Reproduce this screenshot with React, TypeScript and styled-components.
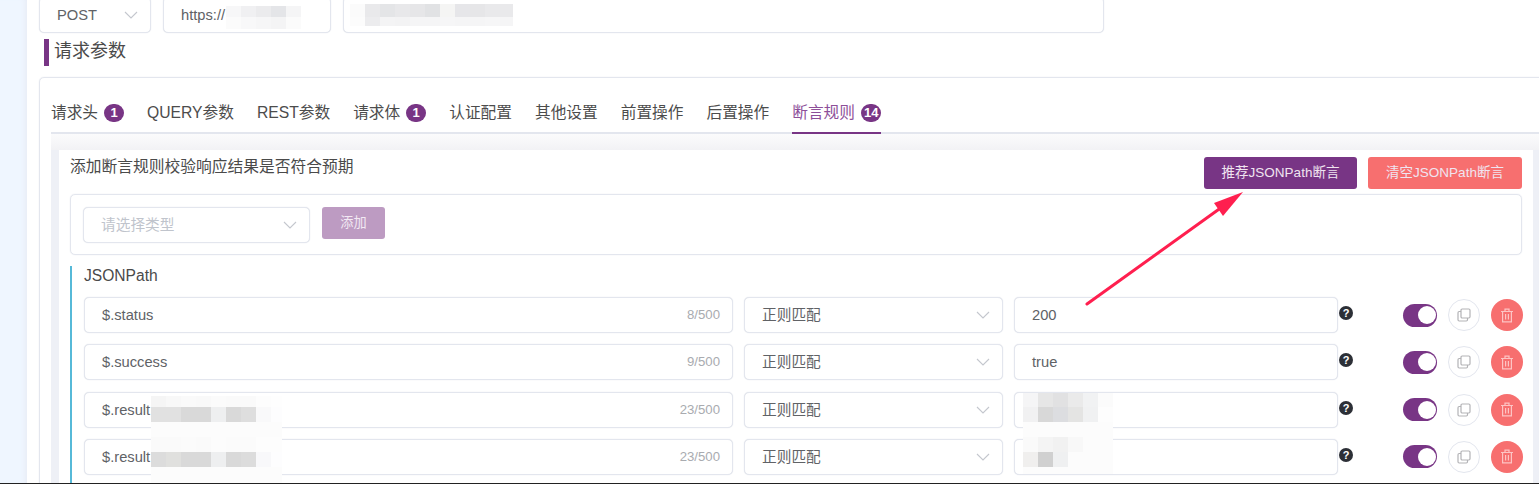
import styled, { createGlobalStyle } from "styled-components";

const PURPLE = "#783585";
const RED = "#f76f6f";
const BORDER = "#e3e6ee";

const GlobalStyle = createGlobalStyle`
  html, body {
    margin: 0;
    padding: 0;
    background: #fff;
  }
  * {
    box-sizing: border-box;
  }
`;

const Frame = styled.div`
  position: relative;
  display: flex;
  width: 1539px;
  height: 484px;
  overflow: hidden;
  background: #fff;
  border-bottom: 1px solid #222;
  font-family: "Liberation Sans", "Noto Sans CJK SC", sans-serif;
  color: #606266;
`;

const Rail = styled.div`
  flex: 0 0 27px;
  background: #eff6ff;
  box-shadow: inset -6px 0 6px -5px #e6e9f2;
`;

const Main = styled.div`
  flex: 1;
  min-width: 0;
  padding-left: 12px;
`;

const TopRow = styled.div`
  display: flex;
  gap: 12px;
  height: 36px;
  margin-top: -3px;
`;

const Field = styled.div<{ $width: number }>`
  flex: 0 0 ${(p) => p.$width}px;
  display: flex;
  align-items: center;
  justify-content: space-between;
  height: 36px;
  padding: 0 12px 0 17px;
  background: #fff;
  border: 1px solid ${BORDER};
  box-shadow: 0 0 1px #d5d8e2;
  border-radius: 5px;
  font-size: 14.7px;
  line-height: 20px;
  white-space: nowrap;
`;

const Placeholder = styled.span`
  color: #c0c4cc;
`;

const Counter = styled.span`
  font-size: 13.2px;
  color: #a9abb0;
`;

const SectionTitle = styled.div`
  height: 27px;
  margin: 6px 0 0 5px;
  padding-left: 5px;
  border-left: 5px solid ${PURPLE};
  font-size: 18px;
  line-height: 25px;
  color: #4a4a4a;
`;

const Card = styled.div`
  width: 1520px;
  height: 420px;
  margin-top: 11px;
  padding-left: 11px;
  border: 1px solid ${BORDER};
  box-shadow: 0 0 1px #d5d8e2;
  border-radius: 5px;
`;

const Tabs = styled.div`
  display: flex;
  gap: 23px;
  height: 56px;
  border-bottom: 2px solid ${BORDER};
`;

const Tab = styled.div<{ $active?: boolean }>`
  display: flex;
  align-items: center;
  gap: 6px;
  height: 56px;
  padding-top: 16px;
  border-bottom: 2px solid ${(p) => (p.$active ? PURPLE : "transparent")};
  font-size: 15.7px;
  line-height: 20px;
  white-space: nowrap;
  color: ${(p) => (p.$active ? "#8d4f99" : "#4c4c4c")};
`;

const Badge = styled.span`
  display: inline-flex;
  align-items: center;
  justify-content: center;
  min-width: 20px;
  height: 18px;
  padding: 0 3px;
  border-radius: 9px;
  background: ${PURPLE};
  color: #fff;
  font-size: 13px;
  font-weight: 700;
`;

const Content = styled.div`
  width: 1488px;
  height: 360px;
  padding: 16px 6px 0 8px;
  background: linear-gradient(#fbfbfc, #f2f2f5 16px, #eef0f6 16px);
`;

const Panel = styled.div`
  height: 344px;
  padding: 7px 11px 0;
  background: #fff;
`;

const PanelHead = styled.div`
  display: flex;
  gap: 11px;
  height: 32px;
`;

const PanelTitle = styled.div`
  flex: 1;
  font-size: 15.75px;
  line-height: 20px;
  color: #4a4a4a;
`;

const Button = styled.div<{ $bg: string; $width: number }>`
  flex: 0 0 ${(p) => p.$width}px;
  display: flex;
  align-items: center;
  justify-content: center;
  height: 32px;
  background: ${(p) => p.$bg};
  border-radius: 3px;
  color: #f0e4f0;
  font-size: 13.5px;
  line-height: 18px;
  white-space: nowrap;
`;

const AddBox = styled.div`
  display: flex;
  gap: 12px;
  align-items: flex-start;
  height: 61px;
  margin-top: 5px;
  padding: 12px 12px 0;
  border: 1px solid ${BORDER};
  box-shadow: 0 0 1px #d5d8e2;
  border-radius: 5px;
`;

const AddButton = styled.div`
  width: 63px;
  height: 32px;
  background: #bd9bc2;
  border-radius: 3px;
  color: #f2e9f3;
  font-size: 13.2px;
  line-height: 31px;
  text-align: center;
`;

const Group = styled.div`
  height: 230px;
  margin-top: 11px;
  padding-left: 12px;
  border-left: 2px solid #56b9d8;
`;

const GroupLabel = styled.div`
  height: 20px;
  font-size: 15.6px;
  line-height: 20px;
  color: #4a4a4a;
`;

const Rows = styled.div`
  display: flex;
  flex-direction: column;
  gap: 11.3px;
  margin-top: 11px;
`;

const Row = styled.div`
  display: flex;
  align-items: center;
  gap: 11px;
  height: 36px;
`;

const Help = styled.span`
  flex: 0 0 14px;
  height: 14px;
  margin: 0 39px 4px -10px;
  border-radius: 50%;
  background: #2c2f36;
  color: #fff;
  font-size: 11px;
  font-weight: 700;
  line-height: 14px;
  text-align: center;
`;

const Switch = styled.div`
  flex: 0 0 34px;
  display: flex;
  justify-content: flex-end;
  align-items: center;
  height: 23px;
  padding-right: 1.5px;
  border-radius: 12px;
  background: ${PURPLE};
`;

const Knob = styled.span`
  width: 18px;
  height: 18px;
  border-radius: 50%;
  background: #fff;
`;

const RoundButton = styled.div<{ $danger?: boolean }>`
  flex: 0 0 32px;
  display: flex;
  align-items: center;
  justify-content: center;
  height: 32px;
  border-radius: 50%;
  background: ${(p) => (p.$danger ? RED : "#fff")};
  border: ${(p) => (p.$danger ? "none" : `1.5px solid ${BORDER}`)};
`;

const Mosaic = styled.div<{ $left: number; $top: number; $width: number }>`
  position: absolute;
  left: ${(p) => p.$left}px;
  top: ${(p) => p.$top}px;
  width: ${(p) => p.$width}px;
  overflow: hidden;
`;

const MosaicRow = styled.div<{ $height: number; $bg: string }>`
  display: flex;
  height: ${(p) => p.$height}px;
  background: ${(p) => p.$bg};
`;

const MosaicCell = styled.span<{ $bg: string }>`
  flex: 0 0 15px;
  background: ${(p) => p.$bg};
`;

const Arrow = styled.svg`
  position: absolute;
  left: 1080px;
  top: 185px;
`;

function Chevron() {
  return (
    <svg width="14" height="8" viewBox="0 0 14 8" fill="none">
      <path d="M1 1l6 6 6-6" stroke="#c4c7ce" strokeWidth="1.1" />
    </svg>
  );
}

function CopyIcon() {
  return (
    <svg width="14" height="14" viewBox="0 0 14 14" fill="none" stroke="#b3b3b6" strokeWidth="1.2">
      <rect x="4" y="1" width="9" height="9" rx="1.2" />
      <path d="M4 3.5H2.2A1.2 1.2 0 0 0 1 4.7v7.1A1.2 1.2 0 0 0 2.2 13h7.1a1.2 1.2 0 0 0 1.2-1.2V10" />
    </svg>
  );
}

function TrashIcon() {
  return (
    <svg width="14" height="15" viewBox="0 0 14 15" fill="none" stroke="#fdc4c4" strokeWidth="1.2">
      <path d="M1 3.5h12M5 3.5V1.2h4v2.3M2.6 3.5v10.3h8.8V3.5M5.6 6v5.5M8.4 6v5.5" />
    </svg>
  );
}

type Patch = {
  left: number;
  top: number;
  width: number;
  rows: { height: number; bg: string; cells: string[] }[];
};

const patches: Patch[] = [
  {
    left: 226,
    top: 6,
    width: 77,
    rows: [
      { height: 11, bg: "#fff", cells: ["#f7f7f8", "#f0f0f2", "#ebebed", "#e4e5e8", "#f5f5f6"] },
      { height: 12, bg: "#fff", cells: ["#fbfbfb", "#f8f8f9", "#f6f6f7", "#f4f4f5", "#fbfbfb"] },
    ],
  },
  {
    left: 350,
    top: 4,
    width: 163,
    rows: [
      {
        height: 13,
        bg: "#fff",
        cells: ["#fbfbfb", "#e9e9eb", "#e4e5e7", "#e8e8ea", "#e6e6e8", "#e1e2e4", "#f5f5f4", "#e6e6e9", "#e6e6e8", "#e9e9eb", "#e9e9eb"],
      },
      {
        height: 9,
        bg: "#fff",
        cells: ["#fcfcfc", "#ececee", "#f4f4f5", "#f3f3f4", "#f5f5f6", "#f5f5f6", "#f6f6f7", "#f5f5f6", "#f5f5f6", "#f6f6f7", "#f5f5f6"],
      },
    ],
  },
  {
    left: 151,
    top: 396,
    width: 131,
    rows: [
      { height: 11, bg: "#fcfcfc", cells: ["#f5f5f5", "#f8f8f8", "#fafafa", "#f9f9f9", "#fbfbfb", "#fafafa", "#fafafa", "#fdfdfd", "#fefefe"] },
      { height: 15, bg: "#fcfcfc", cells: ["#e1e1e1", "#e1e1e1", "#d9d9d9", "#d9d9d9", "#eeeff0", "#d9d9d9", "#dedede", "#f9f9fa", "#fdfdfe"] },
      { height: 15, bg: "#fcfcfc", cells: [] },
      { height: 15, bg: "#fcfcfc", cells: ["#fafafa", "#fafafa", "#fbfbfb", "#fafafa", "#fcfcfc", "#fbfbfb", "#fbfbfb", "#fdfdfd", "#fdfdfd"] },
      { height: 15, bg: "#fcfcfc", cells: ["#dcdcdc", "#e0e0de", "#d9d9d9", "#d9d9d9", "#eeeff0", "#d9d9d9", "#dcdcdc", "#f8f8fa", "#fdfdfe"] },
      { height: 17, bg: "#fcfcfc", cells: [] },
    ],
  },
  {
    left: 1023,
    top: 393,
    width: 90,
    rows: [
      { height: 14, bg: "#fdfdfd", cells: ["#f5f5f6", "#e6e6e6", "#e1e1e2", "#eaeaea", "#f1f2f3", "#fbfbfb"] },
      { height: 15, bg: "#fdfdfd", cells: ["#f1f1f2", "#d8d8d8", "#dcdde0", "#e4e4e3", "#f0f1f2"] },
      { height: 15, bg: "#fcfcfc", cells: [] },
      { height: 15, bg: "#fcfcfc", cells: ["#fafafa", "#f4f4f4", "#f1f1f1", "#f8f8f8"] },
      { height: 15, bg: "#fcfcfc", cells: ["#f0efee", "#d0d0d0", "#eff0f1"] },
      { height: 7, bg: "#fcfcfc", cells: [] },
    ],
  },
];

const tabs = [
  { label: "请求头", badge: "1" },
  { label: "QUERY参数" },
  { label: "REST参数" },
  { label: "请求体", badge: "1" },
  { label: "认证配置" },
  { label: "其他设置" },
  { label: "前置操作" },
  { label: "后置操作" },
  { label: "断言规则", badge: "14", active: true },
];

const rules = [
  { path: "$.status", count: "8/500", value: "200" },
  { path: "$.success", count: "9/500", value: "true" },
  { path: "$.result", count: "23/500", value: "" },
  { path: "$.result", count: "23/500", value: "" },
];

export default function App() {
  return (
    <Frame>
      <GlobalStyle />
      <Rail />
      <Main>
        <TopRow>
          <Field $width={112}>
            POST
            <Chevron />
          </Field>
          <Field $width={168}>https://</Field>
          <Field $width={761} />
        </TopRow>
        <SectionTitle>请求参数</SectionTitle>
        <Card>
          <Tabs>
            {tabs.map((tab) => (
              <Tab key={tab.label} $active={tab.active}>
                {tab.label}
                {tab.badge && <Badge>{tab.badge}</Badge>}
              </Tab>
            ))}
          </Tabs>
          <Content>
            <Panel>
              <PanelHead>
                <PanelTitle>添加断言规则校验响应结果是否符合预期</PanelTitle>
                <Button $bg={PURPLE} $width={153}>推荐JSONPath断言</Button>
                <Button $bg={RED} $width={154}>清空JSONPath断言</Button>
              </PanelHead>
              <AddBox>
                <Field $width={227}>
                  <Placeholder>请选择类型</Placeholder>
                  <Chevron />
                </Field>
                <AddButton>添加</AddButton>
              </AddBox>
              <Group>
                <GroupLabel>JSONPath</GroupLabel>
                <Rows>
                  {rules.map((rule, i) => (
                    <Row key={i}>
                      <Field $width={649}>
                        {rule.path}
                        <Counter>{rule.count}</Counter>
                      </Field>
                      <Field $width={259}>
                        正则匹配
                        <Chevron />
                      </Field>
                      <Field $width={324}>{rule.value}</Field>
                      <Help>?</Help>
                      <Switch>
                        <Knob />
                      </Switch>
                      <RoundButton>
                        <CopyIcon />
                      </RoundButton>
                      <RoundButton $danger>
                        <TrashIcon />
                      </RoundButton>
                    </Row>
                  ))}
                </Rows>
              </Group>
            </Panel>
          </Content>
        </Card>
      </Main>
      {patches.map((patch) => (
        <Mosaic key={patch.left} $left={patch.left} $top={patch.top} $width={patch.width}>
          {patch.rows.map((row, r) => (
            <MosaicRow key={r} $height={row.height} $bg={row.bg}>
              {row.cells.map((cell, c) => (
                <MosaicCell key={c} $bg={cell} />
              ))}
            </MosaicRow>
          ))}
        </Mosaic>
      ))}
      <Arrow width="170" height="125" viewBox="0 0 170 125" fill="none">
        <path d="M7 119L142 22" stroke="#ff1f4f" strokeWidth="3" strokeLinecap="round" />
        <path d="M163 7L134 18L143 31Z" fill="#ff1f4f" />
      </Arrow>
    </Frame>
  );
}
